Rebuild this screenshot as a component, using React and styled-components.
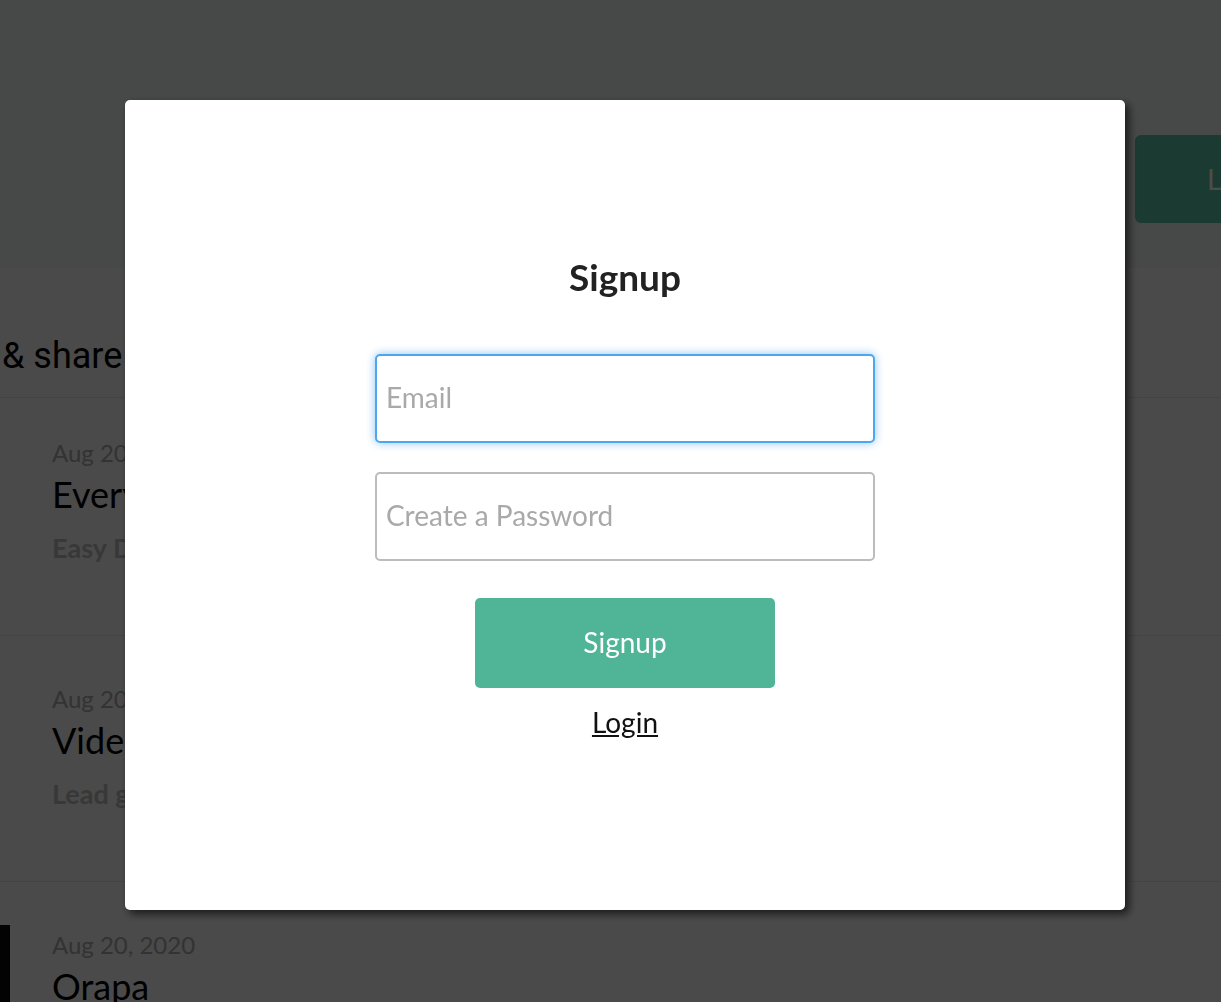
import styled, { createGlobalStyle } from "styled-components";

const GlobalStyle = createGlobalStyle`
    html, body {
        margin: 0;
        padding: 0;
        overflow: hidden;
        background: #f7f7f7;
        font-family: "Lato", "Open Sans", sans-serif;
    }
    * {
        box-sizing: border-box;
    }
`;

const Page = styled.div`
    width: 1221px;
    height: 1002px;
    overflow: hidden;
    background: #f7f7f7;
`;

const Header = styled.header`
    height: 268px;
    background: #edf0f0;
    padding: 135px 0 0 1135px;
    display: flex;
    white-space: nowrap;
    overflow: hidden;
`;

const HeaderButton = styled.button`
    flex-shrink: 0;
    height: 88px;
    padding: 0 72px;
    border: none;
    border-radius: 6px;
    background: #5dc1a7;
    color: #fff;
    font-family: "Lato", sans-serif;
    font-size: 28px;
`;

const Section = styled.section`
    padding: 68px 0 0 2px;
    height: 130px;
    border-bottom: 1px solid #e3e3e3;
`;

const Heading = styled.h2`
    margin: 0;
    font-family: "Roboto", sans-serif;
    font-weight: 400;
    font-size: 36px;
    line-height: 40px;
    color: #000;
`;

const Item = styled.div`
    display: flex;
    gap: 42px;
    height: ${({ $height }) => $height}px;
    padding-top: ${({ $top }) => $top}px;
    border-bottom: 1px solid #e3e3e3;
`;

const Thumb = styled.div`
    width: 10px;
    flex-shrink: 0;
    height: 200px;
    margin-top: -5px;
    background: ${({ $color }) => $color || "transparent"};
`;

const ItemText = styled.div`
    display: flex;
    flex-direction: column;
`;

const ItemDate = styled.span`
    font-size: 24px;
    line-height: 30px;
    color: #aaa;
`;

const ItemTitle = styled.span`
    font-size: 36px;
    line-height: 52px;
    color: #000;
`;

const ItemSub = styled.span`
    margin-top: 11px;
    font-size: 27px;
    font-weight: 700;
    line-height: 34px;
    color: #bcbcbc;
`;

const Overlay = styled.div`
    position: fixed;
    inset: 0;
    background: rgba(0, 0, 0, 0.7);
    padding: 100px 0 0 125px;
`;

const Modal = styled.div`
    width: 1000px;
    height: 810px;
    background: #fff;
    border-radius: 5px;
    box-shadow: 4px 4px 8px rgba(0, 0, 0, 0.65);
    padding-top: 157px;
    display: flex;
    flex-direction: column;
    align-items: center;
`;

const Title = styled.h1`
    margin: 0 0 57px;
    font-family: "Lato", sans-serif;
    font-size: 37px;
    line-height: 40px;
    font-weight: 700;
    color: #222;
`;

const Form = styled.form`
    display: flex;
    flex-direction: column;
    align-items: center;
`;

const Input = styled.input`
    width: 500px;
    height: 89px;
    margin-bottom: ${({ $last }) => ($last ? "37px" : "29px")};
    padding: 0 9px 3px;
    border: 2px solid ${({ $active }) => ($active ? "#4ea6ee" : "#bcbcbc")};
    border-radius: 5px;
    outline: none;
    box-shadow: ${({ $active }) => ($active ? "0 0 10px #8fc4f1" : "none")};
    font-family: "Lato", sans-serif;
    font-size: 28px;
    color: #222;

    &::placeholder {
        color: #a9a9a9;
    }
`;

const SubmitButton = styled.button`
    width: 300px;
    height: 90px;
    padding-bottom: 3px;
    border: none;
    border-radius: 5px;
    background: #50b497;
    color: #fff;
    font-family: "Lato", sans-serif;
    font-size: 28px;
    cursor: pointer;
`;

const LoginLink = styled.a`
    margin-top: 17px;
    font-family: "Lato", sans-serif;
    font-size: 28px;
    line-height: 34px;
    color: #111;
    text-decoration: underline;
    cursor: pointer;
`;

const items = [
    { date: "Aug 20, 2020", title: "Everyday Planner", sub: "Easy Drag & Drop", height: 238, top: 40 },
    { date: "Aug 20, 2020", title: "Video Hub", sub: "Lead generation", height: 246, top: 48 },
    { date: "Aug 20, 2020", title: "Orapa", sub: "Community app", height: 246, top: 48, thumb: "#0a0a0a" },
];

const App = () => {
    return (
        <>
            <GlobalStyle />
            <Page>
                <Header>
                    <HeaderButton>Login</HeaderButton>
                </Header>
                <Section>
                    <Heading>&amp; share your work</Heading>
                </Section>
                {items.map((item, i) => (
                    <Item key={i} $height={item.height} $top={item.top}>
                        <Thumb $color={item.thumb} />
                        <ItemText>
                            <ItemDate>{item.date}</ItemDate>
                            <ItemTitle>{item.title}</ItemTitle>
                            <ItemSub>{item.sub}</ItemSub>
                        </ItemText>
                    </Item>
                ))}
            </Page>

            <Overlay>
                <Modal>
                    <Title>Signup</Title>
                    <Form onSubmit={(e) => e.preventDefault()}>
                        <Input type="email" placeholder="Email" $active />
                        <Input type="password" placeholder="Create a Password" $last />
                        <SubmitButton type="submit">Signup</SubmitButton>
                        <LoginLink>Login</LoginLink>
                    </Form>
                </Modal>
            </Overlay>
        </>
    );
};

export default App;
